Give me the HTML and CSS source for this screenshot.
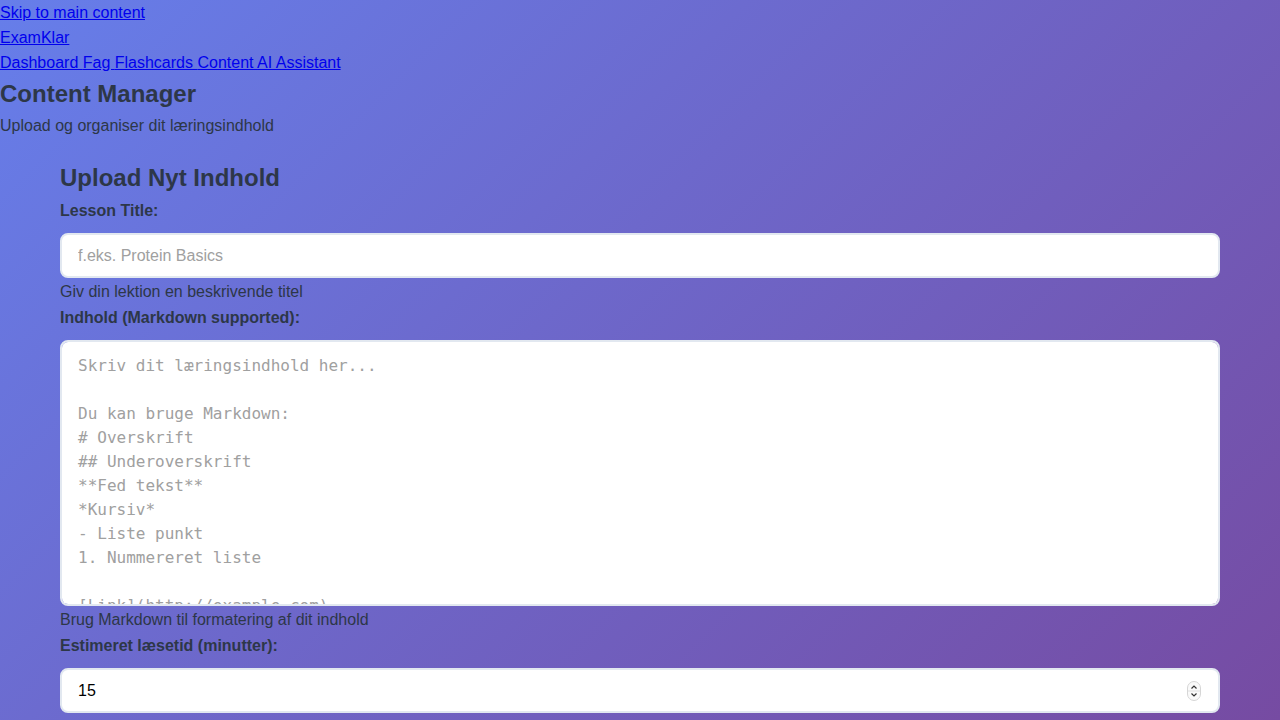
FILE: index.html
```html
<!DOCTYPE html>
<html lang="da">
<head>
<meta charset="utf-8">
<title>Content Manager - ExamKlar</title>
<link rel="stylesheet" href="styles.css">
</head>
<body>
<a class="skip" href="#main">Skip to main content</a>
<header class="site-header">
  <div class="brand"><a href="#">ExamKlar</a></div>
  <nav class="nav"><a href="#">Dashboard </a><a href="#">Fag </a><a href="#">Flashcards </a><a href="#">Content </a><a href="#">AI Assistant</a></nav>
</header>
<div class="page-head">
  <h1 class="page-title">Content Manager</h1>
  <p class="page-sub">Upload og organiser dit læringsindhold</p>
</div>
<main id="main" class="container">
  <section class="upload">
    <h2 class="section-title">Upload Nyt Indhold</h2>
    <form class="form">
      <label class="label" for="title">Lesson Title:</label>
      <input class="field" id="title" type="text" placeholder="f.eks. Protein Basics">
      <small class="help">Giv din lektion en beskrivende titel</small>

      <label class="label" for="content">Indhold (Markdown supported):</label>
      <textarea class="field area" id="content" placeholder="Skriv dit læringsindhold her...

Du kan bruge Markdown:
# Overskrift
## Underoverskrift
**Fed tekst**
*Kursiv*
- Liste punkt
1. Nummereret liste

[Link](http://example.com)"></textarea>
      <small class="help">Brug Markdown til formatering af dit indhold</small>

      <label class="label" for="time">Estimeret læsetid (minutter):</label>
      <div class="number-wrap">
        <input class="field number" id="time" type="number" value="15" min="1">
        <svg class="spinner" width="14" height="20" viewBox="0 0 14 20" aria-hidden="true">
          <rect x="0.5" y="0.5" width="13" height="19" rx="6.5" fill="#fafafa" stroke="#d6d6d6"/>
          <line x1="1" y1="10" x2="13" y2="10" stroke="#e0e0e0"/>
          <polyline points="4.5,7.5 7,5 9.5,7.5" fill="none" stroke="#333" stroke-width="1.2"/>
          <polyline points="4.5,12.5 7,15 9.5,12.5" fill="none" stroke="#333" stroke-width="1.2"/>
        </svg>
      </div>
      <small class="help">Hvor lang tid tager det at læse dette indhold?</small>
    </form>
  </section>
</main>
</body>
</html>
```
FILE: styles.css
```css
html, body {
  margin: 0;
  padding: 0;
}
body {
  font-family: "Liberation Sans", Arial, sans-serif;
  font-size: 16px;
  line-height: 25px;
  color: #2d3748;
  background: linear-gradient(135deg, #667eea 0%, #764ba2 100%) fixed;
  min-height: 100vh;
}
a {
  color: #0000ee;
}
.skip, .brand, .nav {
  display: block;
}
.page-title {
  margin: 0;
  font-size: 24px;
  line-height: 38px;
  font-weight: 700;
}
.page-sub {
  margin: 0;
}
.container {
  box-sizing: border-box;
  max-width: 1200px;
  margin: 0 auto;
  padding: 21px 20px 20px;
}
.section-title {
  margin: 0 0 1px;
  font-size: 24px;
  line-height: 38px;
  font-weight: 700;
}
.form {
  display: flex;
  flex-direction: column;
}
.label {
  font-weight: 700;
  margin-bottom: 10px;
}
.field {
  box-sizing: border-box;
  width: 100%;
  height: 45px;
  padding: 12px 16px;
  border: 2px solid #e2e8f0;
  border-radius: 8px;
  background: #fff;
  font-family: "Liberation Sans", Arial, sans-serif;
  font-size: 16px;
  color: #000;
  outline: none;
}
.field::placeholder {
  color: #a0a0a0;
}
.area {
  height: 266px;
  font-family: "DejaVu Sans Mono", "Liberation Mono", monospace;
  font-size: 16px;
  line-height: 24px;
  resize: none;
}
.number-wrap {
  position: relative;
}
.number {
  -moz-appearance: textfield;
  appearance: textfield;
}
.number::-webkit-inner-spin-button,
.number::-webkit-outer-spin-button {
  -webkit-appearance: none;
  margin: 0;
}
.spinner {
  position: absolute;
  right: 19px;
  top: 13px;
}
.help {
  display: block;
  font-size: 16px;
  line-height: 27px;
  color: #2d3748;
}
```
